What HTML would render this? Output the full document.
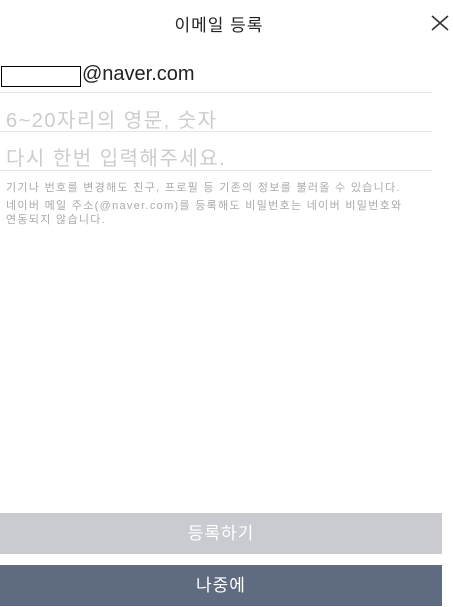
<!DOCTYPE html>
<html><head><meta charset="utf-8"><style>
body{margin:0;width:453px;height:607px;background:#fff;position:relative;overflow:hidden;font-family:"Liberation Sans","Noto Sans CJK KR",sans-serif}
.a{position:absolute;white-space:nowrap}
.line{position:absolute;left:0;width:432px;height:1px;background:#e6e6e6}
.btn{position:absolute;left:0;width:442px;height:41px;color:#fff;font-size:17px;text-align:center;line-height:41px}
.s{font-size:11px;color:#aaa;letter-spacing:1.3px}
</style></head><body>
<div class="a" style="left:0;width:438px;text-align:center;top:11px;font-size:17px;color:#222;letter-spacing:1px">이메일 등록</div>
<svg class="a" style="left:430px;top:14px" width="20" height="18"><path d="M2 2L18 16M18 2L2 16" stroke="#333" stroke-width="1.6"/></svg>
<div class="a" style="left:1px;top:66px;width:78px;height:19px;border:1px solid #000"></div>
<div class="a" style="left:82px;top:63px;font-size:20px;color:#222">@naver.com</div>
<div class="line" style="top:92px"></div>
<div class="a" style="left:6px;top:104px;font-size:20px;color:#ccc;letter-spacing:1.5px">6~20자리의 영문, 숫자</div>
<div class="line" style="top:131px"></div>
<div class="a" style="left:6px;top:142px;font-size:20px;color:#ccc;letter-spacing:1.5px">다시 한번 입력해주세요.</div>
<div class="line" style="top:170px"></div>
<div class="a s" style="left:6px;top:179px">기기나 번호를 변경해도 친구, 프로필 등 기존의 정보를 불러올 수 있습니다.</div>
<div class="a s" style="left:6px;top:199px;line-height:14px">네이버 메일 주소(@naver.com)를 등록해도 비밀번호는 네이버 비밀번호와<br>연동되지 않습니다.</div>
<div class="btn" style="top:513px;background:#c9cbd0;letter-spacing:1px">등록하기</div>
<div class="btn" style="top:565px;background:#5f6b80;letter-spacing:1px">나중에</div>
</body></html>
